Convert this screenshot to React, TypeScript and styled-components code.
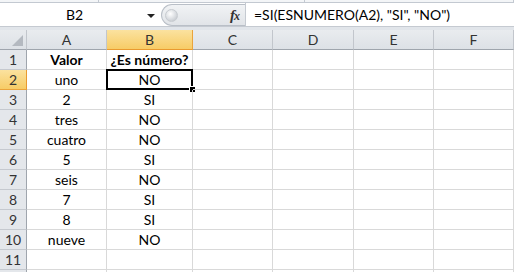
import styled, { createGlobalStyle, css } from 'styled-components'

const GlobalStyle = createGlobalStyle`
  html, body {
    margin: 0;
    padding: 0;
    background: #ffffff;
  }
  body {
    font-family: Lato, "Liberation Sans", sans-serif;
  }
`

const COLUMNS = ['A', 'B', 'C', 'D', 'E', 'F']

const ROWS: [string, string][] = [
  ['Valor', '¿Es número?'],
  ['uno', 'NO'],
  ['2', 'SI'],
  ['tres', 'NO'],
  ['cuatro', 'NO'],
  ['5', 'SI'],
  ['seis', 'NO'],
  ['7', 'SI'],
  ['8', 'SI'],
  ['nueve', 'NO'],
  ['', ''],
]

const SELECTED_ROW = 2
const SELECTED_COL = 'B'

const Window = styled.div`
  width: 514px;
  height: 272px;
  overflow: hidden;
  display: flex;
  flex-direction: column;
  background: #ffffff;

  & > * {
    flex: none;
  }
`

const TopStrip = styled.div`
  height: 2px;
  display: flex;
  background: #f3f5f7;
  border-bottom: 1px solid #c3c9d1;
`

const StripPart = styled.div<{ $w?: number }>`
  width: ${(p) => (p.$w ? `${p.$w}px` : 'auto')};
  flex: ${(p) => (p.$w ? 'none' : '1')};
  border-right: 1px solid #c3c9d1;
`

const FormulaBar = styled.div`
  height: 23px;
  display: flex;
  background: #ffffff;
  border-bottom: 1px solid #c5cad1;
`

const NameBox = styled.div`
  width: 161px;
  display: flex;
  align-items: center;
  font-size: 14px;
  color: #000;
`

const NameText = styled.span`
  flex: 1;
  text-align: center;
  padding-left: 2px;
`

const DropArrow = styled.span`
  width: 0;
  height: 0;
  margin: 2px 6px 0 0;
  border-left: 4px solid transparent;
  border-right: 4px solid transparent;
  border-top: 4px solid #222;
`

const FxZone = styled.div`
  width: 84px;
  box-sizing: border-box;
  display: flex;
  align-items: center;
  justify-content: space-between;
  padding: 0 6px 0 3px;
  background: linear-gradient(#f1f3f5, #e1e4e8);
  border: 1px solid #b9bfc7;
  border-right: none;
  border-radius: 12px 0 0 12px;
  margin-top: 1px;
`

const Grip = styled.span`
  width: 11px;
  height: 11px;
  border-radius: 50%;
  background: radial-gradient(circle at 40% 35%, #ffffff 0%, #d9dce0 55%, #b9bdc3 100%);
  border: 1px solid #c7cbd0;
`

const FxLabel = styled.span`
  font-family: "Liberation Serif", serif;
  font-style: italic;
  font-weight: bold;
  font-size: 15px;
  color: #333;
  letter-spacing: -1px;

  small {
    font-size: 12px;
  }
`

const FormulaInput = styled.div`
  flex: 1;
  display: flex;
  align-items: center;
  padding-left: 8px;
  border-left: 1px solid #c5cad1;
  font-size: 14px;
  color: #000;
  white-space: nowrap;
`

const Gap = styled.div`
  height: 3px;
  background: #e1e5ea;
`

const Sheet = styled.div`
  display: grid;
  grid-template-columns: 27px 80px 86px 80px 81px 80px 80px;
  grid-auto-rows: 20px;
  font-size: 14px;
`

const headerBase = css`
  box-sizing: border-box;
  display: flex;
  align-items: center;
  justify-content: center;
  color: #333;
`

const Corner = styled.div`
  ${headerBase};
  justify-content: flex-end;
  align-items: flex-end;
  padding: 0 3px 3px 0;
  background: linear-gradient(#e8ebee, #dde1e6);
  border-right: 1px solid #c2c6cc;
  border-bottom: 1px solid #9fa5ad;
`

const ColHeader = styled.div<{ $selected?: boolean }>`
  ${headerBase};
  background: ${(p) =>
    p.$selected ? 'linear-gradient(#fbe29f, #f7cc66)' : 'linear-gradient(#e9ecef, #dde1e6)'};
  border-right: 1px solid ${(p) => (p.$selected ? '#eaa43c' : '#c2c6cc')};
  border-bottom: 1px solid ${(p) => (p.$selected ? '#e99a2f' : '#9fa5ad')};
`

const RowHeader = styled.div<{ $selected?: boolean }>`
  ${headerBase};
  background: ${(p) => (p.$selected ? 'linear-gradient(#fbe29f, #f7cc66)' : '#e4e7eb')};
  border-right: 1px solid ${(p) => (p.$selected ? '#e99a2f' : '#9fa5ad')};
  border-bottom: 1px solid ${(p) => (p.$selected ? '#eaa43c' : '#c5c9cf')};
`

const Cell = styled.div<{ $bold?: boolean; $active?: boolean }>`
  box-sizing: border-box;
  position: relative;
  display: flex;
  align-items: center;
  justify-content: center;
  white-space: nowrap;
  color: #000;
  font-weight: ${(p) => (p.$bold ? 700 : 400)};
  border-right: 1px solid #d9d9d9;
  border-bottom: 1px solid #d9d9d9;

  ${(p) =>
    p.$active &&
    css`
      &::before {
        content: '';
        position: absolute;
        top: -1px;
        left: -1px;
        right: -1px;
        bottom: -1px;
        border: 2px solid #000;
        pointer-events: none;
      }
      &::after {
        content: '';
        position: absolute;
        right: -4px;
        bottom: -4px;
        width: 5px;
        height: 5px;
        background: #000;
        border: 1px solid #fff;
      }
    `}
`

const CornerMark = () => (
  <svg width="11" height="11" viewBox="0 0 11 11">
    <polygon points="11,0 11,11 0,11" fill="#b4b9c0" />
  </svg>
)

export default function App() {
  return (
    <>
      <GlobalStyle />
      <Window>
        <TopStrip>
          <StripPart $w={98} />
          <StripPart $w={205} />
          <StripPart />
        </TopStrip>
        <FormulaBar>
          <NameBox>
            <NameText>B2</NameText>
            <DropArrow />
          </NameBox>
          <FxZone>
            <Grip />
            <FxLabel>
              f<small>x</small>
            </FxLabel>
          </FxZone>
          <FormulaInput>=SI(ESNUMERO(A2), "SI", "NO")</FormulaInput>
        </FormulaBar>
        <Gap />
        <Sheet>
          <Corner>
            <CornerMark />
          </Corner>
          {COLUMNS.map((c) => (
            <ColHeader key={c} $selected={c === SELECTED_COL}>
              {c}
            </ColHeader>
          ))}
          {ROWS.map(([a, b], i) => {
            const row = i + 1
            return [
              <RowHeader key={`h${row}`} $selected={row === SELECTED_ROW}>
                {row}
              </RowHeader>,
              <Cell key={`a${row}`} $bold={row === 1}>
                {a}
              </Cell>,
              <Cell key={`b${row}`} $bold={row === 1} $active={row === SELECTED_ROW}>
                {b}
              </Cell>,
              ...COLUMNS.slice(2).map((c) => <Cell key={`${c}${row}`} />),
            ]
          })}
          <RowHeader />
          {COLUMNS.map((c) => (
            <Cell key={`${c}12`} />
          ))}
        </Sheet>
      </Window>
    </>
  )
}
